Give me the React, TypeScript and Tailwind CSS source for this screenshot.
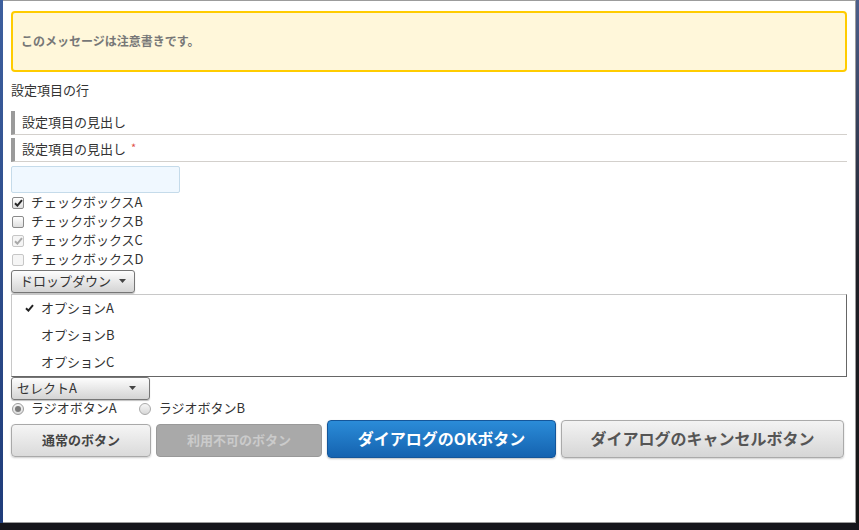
import React from 'react';

// Settings dialog sample: notice, headings, form controls and dialog buttons.

const font = "font-['Meiryo','Noto_Sans_CJK_JP',sans-serif]";

function Check({ color }: { color: string }) {
  return (
    <svg width="9" height="8" viewBox="0 0 9 8" className="block">
      <path d="M1 4.2 L3.4 6.6 L8 1.2" fill="none" stroke={color} strokeWidth="2" />
    </svg>
  );
}

function Arrow() {
  return (
    <svg width="7" height="4" viewBox="0 0 7 4" className="block">
      <polygon points="0,0 7,0 3.5,4" fill="#444" />
    </svg>
  );
}

function CheckRow({ label, checked, disabled }: { label: string; checked?: boolean; disabled?: boolean }) {
  const box = disabled
    ? 'border-[#c6c6c6] bg-[#f5f5f5]'
    : 'border-[#8a8a8a] bg-gradient-to-b from-[#ffffff] to-[#dedede]';
  return (
    <div className="flex h-[19px] items-center">
      <span className={`ml-px flex h-[12px] w-[12px] items-center justify-center rounded-[2px] border ${box}`}>
        {checked && <Check color={disabled ? '#a8a8a8' : '#262626'} />}
      </span>
      <span className="ml-[7px] pb-px text-[13px] leading-[16px] text-[#333]">{label}</span>
    </div>
  );
}

function Heading({ children }: { children: React.ReactNode }) {
  return (
    <div className="flex h-[24px] items-center border-b border-l-4 border-b-[#d3d0cc] border-l-[#9a9a9a] pb-[2px] pl-[7px] text-[13px] leading-[16px] text-[#333]">
      {children}
    </div>
  );
}

export default function App() {
  return (
    <div className={`flex h-[530px] w-[859px] flex-col bg-[#15151b] ${font}`}>
      <div className="flex h-[523px]">
        <div className="w-[3px] bg-gradient-to-b from-[#3d5f9e] to-[#1f3c7a]" />
        <div className="flex w-[853px] flex-col border-b border-r border-t border-[#9c9c9c] bg-white px-2 pt-[10px]">
          <div className="flex h-[61px] items-center rounded-[4px] border-2 border-[#ffcc00] bg-[#fff7da] px-2">
            <span className="pb-px text-[12px] font-bold leading-[16px] text-[#777]">このメッセージは注意書きです。</span>
          </div>

          <div className="mt-[10px] text-[13px] leading-[16px] text-[#333]">設定項目の行</div>

          <div className="mt-[13px]">
            <Heading>設定項目の見出し</Heading>
          </div>
          <div className="mt-[3px]">
            <Heading>
              設定項目の見出し
              <span className="relative -top-[2px] ml-[5px] text-[11px] text-[#e0504a]">*</span>
            </Heading>
          </div>

          <div className="mt-[4px] h-[27px] w-[169px] rounded-[2px] border border-[#c5dbea] bg-[#f0f8ff]" />

          <div className="flex flex-col">
            <CheckRow label="チェックボックスA" checked />
            <CheckRow label="チェックボックスB" />
            <CheckRow label="チェックボックスC" checked disabled />
            <CheckRow label="チェックボックスD" disabled />
          </div>

          <div className="mt-px flex h-[23px] w-[124px] items-center rounded-[3px] border border-[#767676] bg-gradient-to-b from-[#fdfdfd] to-[#d4d4d4] pb-px pl-[8px] shadow-[0_1px_1px_rgba(0,0,0,0.25)]">
            <span className="text-[13px] leading-[16px] text-[#333]">ドロップダウン</span>
            <span className="ml-[8px]">
              <Arrow />
            </span>
          </div>

          <div className="mt-px flex flex-col border-b border-l border-r border-t border-b-[#666] border-l-[#c8c8c8] border-r-[#666] border-t-[#c8c8c8] bg-white">
            {['オプションA', 'オプションB', 'オプションC'].map((o, i) => (
              <div key={o} className="flex h-[27px] items-center pb-[2px] pl-[13px]">
                <span className="flex w-[16px] items-center">{i === 0 && <Check color="#222" />}</span>
                <span className="text-[13px] leading-[16px] text-[#333]">{o}</span>
              </div>
            ))}
          </div>

          <div className="flex h-[23px] w-[139px] items-center justify-between rounded-[3px] border border-[#767676] bg-gradient-to-b from-[#fdfdfd] to-[#d4d4d4] pb-px pl-[5px] pr-[13px] shadow-[0_1px_1px_rgba(0,0,0,0.25)]">
            <span className="text-[13px] leading-[16px] text-[#333]">セレクトA</span>
            <Arrow />
          </div>

          <div className="flex h-[17px] items-center">
            <span className="ml-px flex h-[12px] w-[12px] items-center justify-center rounded-full border border-[#9a9a9a] bg-gradient-to-b from-[#f4f4f4] to-[#dcdcdc]">
              <span className="h-[6px] w-[6px] rounded-full bg-[#7a7a7a]" />
            </span>
            <span className="ml-[7px] pb-px text-[13px] leading-[16px] text-[#333]">ラジオボタンA</span>
            <span className="ml-[22px] h-[12px] w-[12px] rounded-full border border-[#aaa] bg-gradient-to-b from-[#f6f6f6] to-[#d8d8d8]" />
            <span className="ml-[8px] pb-px text-[13px] leading-[16px] text-[#333]">ラジオボタンB</span>
          </div>

          <div className="mt-[3px] flex items-center gap-[5px]">
            <button className="mt-[3px] h-[33px] w-[140px] rounded-[4px] border border-[#a9a9a9] bg-gradient-to-b from-[#f5f5f5] to-[#dadada] pb-px text-[13px] font-bold text-[#444] shadow-[0_1px_2px_rgba(0,0,0,0.2)]">
              通常のボタン
            </button>
            <button className="mt-[3px] h-[33px] w-[166px] rounded-[4px] border border-[#999] bg-[#a9a9a9] pb-px text-[13px] font-bold text-[#cbcbcb]">
              利用不可のボタン
            </button>
            <button className="h-[38px] w-[229px] rounded-[4px] border border-[#14569a] bg-gradient-to-b from-[#2b8cd8] to-[#1563b0] pb-[2px] text-[16px] font-bold text-white shadow-[0_1px_2px_rgba(0,0,0,0.25)]">
              ダイアログのOKボタン
            </button>
            <button className="h-[38px] w-[283px] rounded-[4px] border border-[#aaa] bg-gradient-to-b from-[#f3f3f3] to-[#d6d6d6] pb-[2px] text-[16px] font-bold text-[#555] shadow-[0_1px_2px_rgba(0,0,0,0.2)]">
              ダイアログのキャンセルボタン
            </button>
          </div>
        </div>
        <div className="flex-1 bg-gradient-to-b from-[#4c5f8c] via-[#202028] to-[#141414]" />
      </div>
    </div>
  );
}
